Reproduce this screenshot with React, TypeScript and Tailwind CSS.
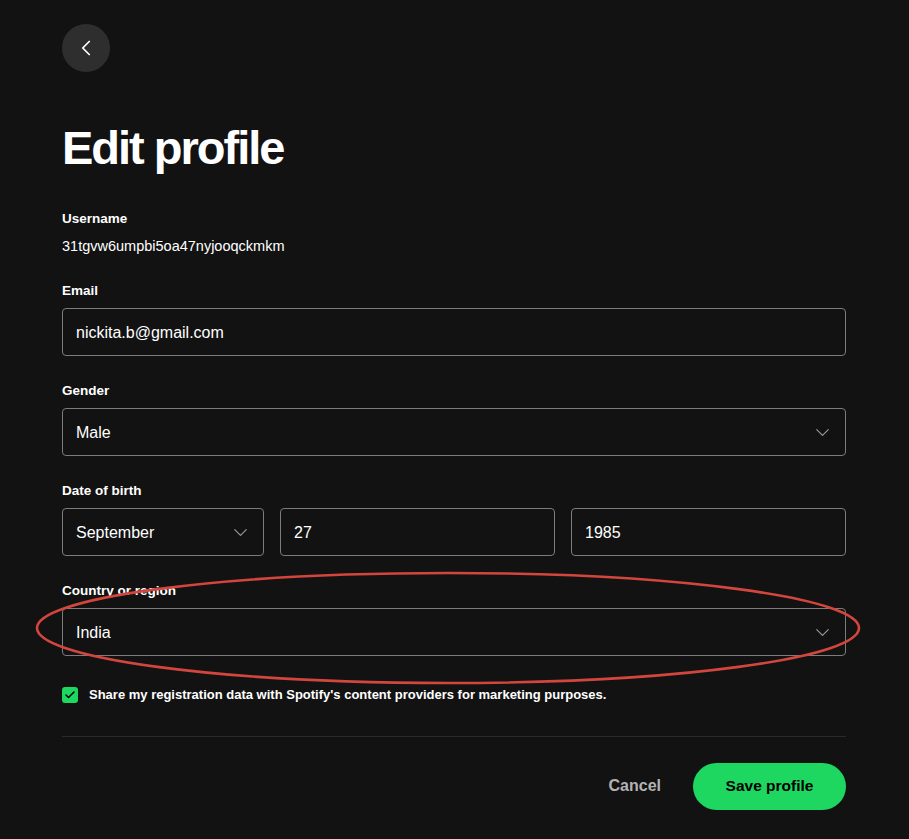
import { ChevronDown, ChevronLeft, Check } from "lucide-react";

const FONT = { fontFamily: '"Liberation Sans", Arial, sans-serif' };

function Label({ children }: { children: React.ReactNode }) {
  return <div className="h-5 flex items-center text-[13.5px] font-bold text-white">{children}</div>;
}

function Box({ value, select, className = "" }: { value: string; select?: boolean; className?: string }) {
  return (
    <div
      className={`h-12 rounded-[4px] border border-[#7c7c7c] bg-[#121212] flex items-center justify-between pl-[13px] pr-[11px] text-[16px] text-white ${className}`}
    >
      <span className="pt-px">{value}</span>
      {select && <ChevronDown size={23} strokeWidth={1.2} className="text-[#9a9a9a]" />}
    </div>
  );
}

export default function App() {
  return (
    <div className="relative min-h-[839px] bg-[#121212] text-white overflow-hidden" style={FONT}>
      <div className="w-[784px] ml-[62px] pt-6">
        <button
          type="button"
          className="w-12 h-12 rounded-full bg-[#2e2e2e] flex items-center justify-center text-white"
        >
          <ChevronLeft size={26} strokeWidth={1.6} />
        </button>

        <h1 className="mt-[47px] h-[56px] flex items-center text-[47px] font-bold tracking-[-2px] leading-none">
          Edit profile
        </h1>

        <div className="mt-[34px]">
          <Label>Username</Label>
          <div className="mt-2 h-5 flex items-center text-[14.5px] text-white">31tgvw6umpbi5oa47nyjooqckmkm</div>
        </div>

        <div className="mt-6">
          <Label>Email</Label>
          <Box className="mt-[7px]" value="nickita.b@gmail.com" />
        </div>

        <div className="mt-[25px]">
          <Label>Gender</Label>
          <Box className="mt-[7px]" value="Male" select />
        </div>

        <div className="mt-[25px]">
          <Label>Date of birth</Label>
          <div className="mt-[7px] flex gap-4">
            <Box className="w-[202px]" value="September" select />
            <Box className="flex-1" value="27" />
            <Box className="w-[275px]" value="1985" />
          </div>
        </div>

        <div className="mt-[25px]">
          <Label>Country or region</Label>
          <Box className="mt-[7px]" value="India" select />
        </div>

        <div className="mt-[29px] flex items-center gap-[11px]">
          <div className="w-4 h-4 rounded-[3px] bg-[#1ed760] flex items-center justify-center">
            <Check size={12} strokeWidth={3} className="text-black" />
          </div>
          <span className="text-[13px] font-bold text-white">
            Share my registration data with Spotify's content providers for marketing purposes.
          </span>
        </div>

        <div className="mt-[31px] border-t border-[#2a2a2a]" />

        <div className="mt-[26px] flex items-center justify-end gap-8">
          <button type="button" className="text-[16px] font-bold text-[#b3b3b3] px-0">
            Cancel
          </button>
          <button
            type="button"
            className="h-[47px] w-[153px] rounded-full bg-[#1ed760] text-black text-[15.5px] font-bold"
          >
            Save profile
          </button>
        </div>
      </div>

      <svg className="absolute inset-0 pointer-events-none" width="909" height="839">
        <ellipse cx="448" cy="628" rx="411" ry="55" fill="none" stroke="#d2463d" strokeWidth="2.6" />
      </svg>
    </div>
  );
}
